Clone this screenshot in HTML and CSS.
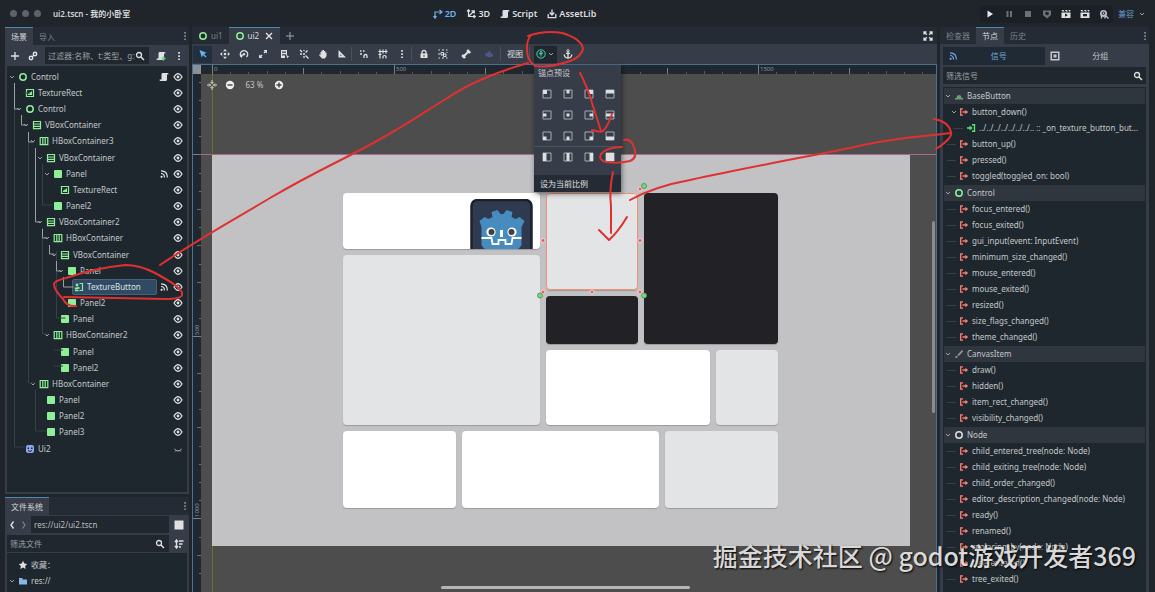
FILE: index.html
```html
<!DOCTYPE html>
<html lang="zh-CN">
<head>
<meta charset="utf-8">
<title>ui2.tscn - 我的小卧室</title>
<link rel="stylesheet" href="styles.css">
</head>
<body>
<svg class="defs" aria-hidden="true">
  <symbol id="caret" viewBox="0 0 8 8"><path d="M2 3l2 2 2-2" fill="none" stroke="#9aa1a8"/></symbol>
  <symbol id="control" viewBox="0 0 10 10"><circle cx="5" cy="5" r="3.2" fill="none" stroke="#8eef97" stroke-width="1.5"/></symbol>
  <symbol id="node" viewBox="0 0 10 10"><circle cx="5" cy="5" r="3.2" fill="none" stroke="#e0e0e0" stroke-width="1.5"/></symbol>
  <symbol id="texrect" viewBox="0 0 10 10"><path d="M1.5 1.5h7v7h-7z" fill="none" stroke="#8eef97" stroke-width="1.2"/><path d="M3 7V5.5h1.2V4.5h1V5L6 3.5h1V7z" fill="#8eef97"/></symbol>
  <symbol id="vbox" viewBox="0 0 10 10"><path d="M1.5 1.5h7v7.2h-7zM1.5 4h7M1.5 6.3h7" fill="none" stroke="#8eef97" stroke-width="1.2"/></symbol>
  <symbol id="hbox" viewBox="0 0 10 10"><path d="M1.2 1.5h7.6v7.2H1.2zM3.8 1.5v7M6.2 1.5v7" fill="none" stroke="#8eef97" stroke-width="1.2"/></symbol>
  <symbol id="panel" viewBox="0 0 10 10"><rect x="1" y="1" width="8" height="8" rx="1" fill="#8eef97"/></symbol>
  <symbol id="texbtn" viewBox="0 0 10 10"><path d="M5.5 1.5h3v7h-3M1 8.6h3.500" fill="none" stroke="#8eef97" stroke-width="1.2"/><circle cx="3" cy="3" r="1.4" fill="#8eef97"/><path d="M.8 7.500V5.500h2.500v-1l3.200 1.500-3.200 1.500z" fill="#8eef97"/></symbol>
  <symbol id="ui2" viewBox="0 0 10 10"><rect x="1" y="1" width="8" height="8" rx="2" fill="#8da5f3"/><path d="M3 6.500q2 2 4 0" fill="none" stroke="#1f272e"/><path d="M2.500 3.500h1.500v1.500H2.500zM6 3.500h1.500v1.500H6z" fill="#1f272e"/></symbol>
  <symbol id="eye" viewBox="0 0 10 10"><path d="M1 5q4-6.800 8 0q-4 6.800-8 0z" fill="none" stroke="#e0e0e0" stroke-width="1.200"/><circle cx="5" cy="5" r="1.400" fill="#e0e0e0"/></symbol>
  <symbol id="shut" viewBox="0 0 10 10"><path d="M1.500 5q3.500 4 7 0M3 6.500l-.8 1M7 6.500l.8 1" fill="none" stroke="#b8bcc0"/></symbol>
  <symbol id="script" viewBox="0 0 10 10"><path d="M3.500 1h5q1 0 1 1.500H8V7.500Q8 9 6.500 9h-5Q.5 9 .5 7.500h2V2.500Q2.500 1 3.500 1z" fill="currentColor"/></symbol>
  <symbol id="sig" viewBox="0 0 10 10"><path d="M2 4.500q3.500 0 3.500 4M2 1.800q6.400 0 6.400 6.700" fill="none" stroke="currentColor" stroke-width="1.200"/><circle cx="2.600" cy="7.800" r="1.100" fill="currentColor"/></symbol>
  <symbol id="signal" viewBox="0 0 10 10"><path d="M4 1.800H1.700v6.400H4M3.500 5h4" fill="none" stroke="#fc7f73" stroke-width="1.300"/><path d="M6.300 2.700L9.200 5 6.300 7.300z" fill="#fc7f73"/></symbol>
  <symbol id="slot" viewBox="0 0 10 10"><path d="M6 1.800h2.500v6.400H6M1 5h3" fill="none" stroke="#5fe070" stroke-width="1.400"/><path d="M3.500 2.500L6.700 5 3.500 7.500z" fill="#5fe070"/></symbol>
  <symbol id="search" viewBox="0 0 10 10"><circle cx="4" cy="4" r="2.500" fill="none" stroke="#e0e0e0" stroke-width="1.300"/><path d="M6 6l3 3" stroke="#e0e0e0" stroke-width="1.500"/></symbol>
  <symbol id="dots" viewBox="0 0 10 10"><path d="M4.200 1h1.700v1.700H4.200zM4.200 4.200h1.700v1.700H4.200zM4.200 7.400h1.700v1.700H4.200z" fill="currentColor"/></symbol>
  <symbol id="basebtn" viewBox="0 0 10 10"><path d="M1 8.500V7h1.500q.3-3 2.500-3t2.500 3H9v1.500z" fill="#6d9e74"/></symbol>
  <symbol id="brush" viewBox="0 0 10 10"><path d="M1 9q0-2 2-2.500L4 7.500Q3.500 9 1 9zM3.500 5.800L8 1l1.300 1.300-4.500 4.700z" fill="#8f9499"/></symbol>
</svg>

<div class="editor">
<header class="top">
  <div class="title"><i></i><i></i><i></i><b>ui2.tscn - 我的小卧室</b></div>
  <nav class="modes">
    <button class="on"><svg class="ic"><path d="M2 9V3h6M.5 7L2 9.200 3.500 7M6.500 1L9 3 6.500 5" fill="none" stroke="currentColor" stroke-width="1.200"/></svg>2D</button>
    <button><svg class="ic"><path d="M2.500 1v6.500H9M2.500 7.500L8 2M1 2.500L2.500 .8 4 2.500M5.500 1.800H8.300V4.500M7.500 6l1.800 1.500L7.500 9" fill="none" stroke="currentColor" stroke-width="1.200"/></svg>3D</button>
    <button><svg class="ic"><use href="#script"/></svg>Script</button>
    <button><svg class="ic"><path d="M5 .5v5M2.700 3.500L5 6l2.300-2.500M1.200 5v3.700h7.600V5" fill="none" stroke="currentColor" stroke-width="1.300"/></svg>AssetLib</button>
  </nav>
  <div class="run">
    <div class="play">
      <button aria-label="运行"><svg class="ic"><path d="M2.500 1.500v7L8 5z" fill="#e8e8e8"/></svg></button>
      <button aria-label="暂停"><svg class="ic"><path d="M2.500 2h2v6h-2zM6 2h2v6H6z" fill="#6d7278"/></svg></button>
      <button aria-label="停止"><svg class="ic"><path d="M2 2h6v6H2z" fill="#6d7278"/></svg></button>
      <button aria-label="远程"><svg class="ic"><path d="M1 1.500h8v4.500L5 9.500 1 6z" fill="#6d7278"/><circle cx="5" cy="4.500" r="1.800" fill="#20262c"/></svg></button>
      <button aria-label="运行场景"><svg class="ic"><path d="M.5 3.500h9V9h-9zM.5 1h2l1 1.500h-2zM4 1h2l1 1.500H5zM7.300 1h2v1.500h-1z" fill="#e0e0e0"/><path d="M4 4.500v3.300L7 6.100z" fill="#20262c"/></svg></button>
      <button aria-label="运行指定场景"><svg class="ic"><path d="M.5 3.500h9V9h-9zM.5 1h2l1 1.500h-2zM4 1h2l1 1.500H5zM7.300 1h2v1.500h-1z" fill="#e0e0e0"/><path d="M3 5h4v2.300H3z" fill="#20262c"/></svg></button>
      <button aria-label="录制"><svg class="ic"><circle cx="4.500" cy="4.500" r="3.500" fill="#b9bdc1"/><path d="M6 6l3.500 3.500M2.500 7v2.500M6 7v2.500" stroke="#b9bdc1" stroke-width="1.400"/><circle cx="4.500" cy="4.200" r="1.300" fill="none" stroke="#20262c"/></svg></button>
    </div>
    <button class="compat">兼容<svg class="ca"><use href="#caret"/></svg></button>
  </div>
</header>

<main class="work">
<aside class="left">
  <section class="dock scene">
    <div class="tabs"><button class="tab on">场景</button><button class="tab">导入</button><button class="more" aria-label="菜单"><svg class="ic"><use href="#dots"/></svg></button></div>
    <div class="body">
      <div class="tools">
        <button aria-label="添加"><svg class="ic"><path d="M5 1v8M1 5h8" stroke="#e0e0e0" stroke-width="1.300"/></svg></button>
        <button aria-label="实例化"><svg class="ic"><circle cx="7" cy="3" r="1.700" fill="none" stroke="#e0e0e0" stroke-width="1.500"/><circle cx="3" cy="7" r="1.700" fill="none" stroke="#e0e0e0" stroke-width="1.500"/><path d="M4 6l2-2" stroke="#e0e0e0" stroke-width="1.300"/></svg></button>
        <label class="field"><input aria-label="过滤器" placeholder="过滤器:名称、t:类型、g:组"><svg class="ic"><use href="#search"/></svg></label>
        <button aria-label="脚本"><svg class="ic"><use href="#script"/><path d="M7.500 5.500v4M5.500 7.500h4" stroke="#5fe070" stroke-width="1.500"/></svg></button>
        <button aria-label="更多"><svg class="ic"><use href="#dots"/></svg></button>
      </div>
      <div class="tree">
        <svg class="guides">
          <path class="dim" d="M7.500 41v339h10M21.500 73v243h6M35.500 97v41h10M35.500 160v107h6M49.500 184v67h9M28.500 323v41h11M16 26h7M47 283h9M47 299h9"/>
          <path d="M7.500 16v26h5M14.500 48v10h5M21.500 65v10h5M28.500 81v74h5M35.500 162v9h5M42.500 178v9h5M49.500 194v10h5M56.500 210v10h10"/>
        </svg>
        <div class="row d0"><svg class="ca"><use href="#caret"/></svg><svg class="ic"><use href="#control"/></svg><span>Control</span><button aria-label="打开脚本"><svg class="ic"><use href="#script"/></svg></button><button aria-label="可见"><svg class="ic"><use href="#eye"/></svg></button></div>
        <div class="row d1"><i class="ca"></i><svg class="ic"><use href="#texrect"/></svg><span>TextureRect</span><button aria-label="可见"><svg class="ic"><use href="#eye"/></svg></button></div>
        <div class="row d1"><svg class="ca"><use href="#caret"/></svg><svg class="ic"><use href="#control"/></svg><span>Control</span><button aria-label="可见"><svg class="ic"><use href="#eye"/></svg></button></div>
        <div class="row d2"><svg class="ca"><use href="#caret"/></svg><svg class="ic"><use href="#vbox"/></svg><span>VBoxContainer</span><button aria-label="可见"><svg class="ic"><use href="#eye"/></svg></button></div>
        <div class="row d3"><svg class="ca"><use href="#caret"/></svg><svg class="ic"><use href="#hbox"/></svg><span>HBoxContainer3</span><button aria-label="可见"><svg class="ic"><use href="#eye"/></svg></button></div>
        <div class="row d4"><svg class="ca"><use href="#caret"/></svg><svg class="ic"><use href="#vbox"/></svg><span>VBoxContainer</span><button aria-label="可见"><svg class="ic"><use href="#eye"/></svg></button></div>
        <div class="row d5"><svg class="ca"><use href="#caret"/></svg><svg class="ic"><use href="#panel"/></svg><span>Panel</span><button aria-label="信号"><svg class="ic"><use href="#sig"/></svg></button><button aria-label="可见"><svg class="ic"><use href="#eye"/></svg></button></div>
        <div class="row d6"><i class="ca"></i><svg class="ic"><use href="#texrect"/></svg><span>TextureRect</span><button aria-label="可见"><svg class="ic"><use href="#eye"/></svg></button></div>
        <div class="row d5"><i class="ca"></i><svg class="ic"><use href="#panel"/></svg><span>Panel2</span><button aria-label="可见"><svg class="ic"><use href="#eye"/></svg></button></div>
        <div class="row d4"><svg class="ca"><use href="#caret"/></svg><svg class="ic"><use href="#vbox"/></svg><span>VBoxContainer2</span><button aria-label="可见"><svg class="ic"><use href="#eye"/></svg></button></div>
        <div class="row d5"><svg class="ca"><use href="#caret"/></svg><svg class="ic"><use href="#hbox"/></svg><span>HBoxContainer</span><button aria-label="可见"><svg class="ic"><use href="#eye"/></svg></button></div>
        <div class="row d6"><svg class="ca"><use href="#caret"/></svg><svg class="ic"><use href="#vbox"/></svg><span>VBoxContainer</span><button aria-label="可见"><svg class="ic"><use href="#eye"/></svg></button></div>
        <div class="row d7"><svg class="ca"><use href="#caret"/></svg><svg class="ic"><use href="#panel"/></svg><span>Panel</span><button aria-label="可见"><svg class="ic"><use href="#eye"/></svg></button></div>
        <div class="row d8"><i class="ca"></i><div class="sel"><svg class="ic"><use href="#texbtn"/></svg><span>TextureButton</span></div><button aria-label="信号"><svg class="ic"><use href="#sig"/></svg></button><button aria-label="可见"><svg class="ic"><use href="#eye"/></svg></button></div>
        <div class="row d7"><i class="ca"></i><svg class="ic"><use href="#panel"/></svg><span>Panel2</span><button aria-label="可见"><svg class="ic"><use href="#eye"/></svg></button></div>
        <div class="row d6"><i class="ca"></i><svg class="ic"><use href="#panel"/></svg><span>Panel</span><button aria-label="可见"><svg class="ic"><use href="#eye"/></svg></button></div>
        <div class="row d5"><svg class="ca"><use href="#caret"/></svg><svg class="ic"><use href="#hbox"/></svg><span>HBoxContainer2</span><button aria-label="可见"><svg class="ic"><use href="#eye"/></svg></button></div>
        <div class="row d6"><i class="ca"></i><svg class="ic"><use href="#panel"/></svg><span>Panel</span><button aria-label="可见"><svg class="ic"><use href="#eye"/></svg></button></div>
        <div class="row d6"><i class="ca"></i><svg class="ic"><use href="#panel"/></svg><span>Panel2</span><button aria-label="可见"><svg class="ic"><use href="#eye"/></svg></button></div>
        <div class="row d3"><svg class="ca"><use href="#caret"/></svg><svg class="ic"><use href="#hbox"/></svg><span>HBoxContainer</span><button aria-label="可见"><svg class="ic"><use href="#eye"/></svg></button></div>
        <div class="row d4"><i class="ca"></i><svg class="ic"><use href="#panel"/></svg><span>Panel</span><button aria-label="可见"><svg class="ic"><use href="#eye"/></svg></button></div>
        <div class="row d4"><i class="ca"></i><svg class="ic"><use href="#panel"/></svg><span>Panel2</span><button aria-label="可见"><svg class="ic"><use href="#eye"/></svg></button></div>
        <div class="row d4"><i class="ca"></i><svg class="ic"><use href="#panel"/></svg><span>Panel3</span><button aria-label="可见"><svg class="ic"><use href="#eye"/></svg></button></div>
        <div class="row d1"><i class="ca"></i><svg class="ic"><use href="#ui2"/></svg><span>Ui2</span><button aria-label="隐藏"><svg class="ic"><use href="#shut"/></svg></button></div>
      </div>
    </div>
  </section>
  <section class="dock files">
    <div class="tabs"><button class="tab on">文件系统</button><button class="more" aria-label="菜单"><svg class="ic"><use href="#dots"/></svg></button></div>
    <div class="body">
      <div class="tools path">
        <button aria-label="后退"><svg class="ic"><path d="M6.500 1.500L4 5l2.500 3.500" fill="none" stroke="#e0e0e0" stroke-width="1.400"/></svg></button>
        <button aria-label="前进"><svg class="ic"><path d="M3.500 1.500L6 5 3.500 8.500" fill="none" stroke="#7d838a" stroke-width="1.200"/></svg></button>
        <label class="field"><input aria-label="路径" value="res://ui2/ui2.tscn"></label>
        <button aria-label="拆分模式"><svg class="ic"><path d="M.5 .5h9v9h-9z" fill="#e0e0e0"/></svg></button>
      </div>
      <div class="tools">
        <label class="field"><input aria-label="筛选文件" placeholder="筛选文件"><svg class="ic"><use href="#search"/></svg></label>
        <button aria-label="排序"><svg class="ic"><path d="M2.500 2v6M1 3l1.500-2L4 3M1 7l1.500 2L4 7M5 2h4.500M5 5h3.500M5 8h2" fill="none" stroke="#e0e0e0" stroke-width="1.300"/></svg></button>
      </div>
      <div class="tree">
        <div class="row d0"><i class="ca"></i><svg class="ic"><path d="M5 .8l1.300 2.800 3 .4-2.200 2 .6 3L5 7.600 2.300 9l.6-3L.7 4l3-.4z" fill="#e0e0e0"/></svg><span>收藏：</span></div>
        <div class="row d0"><svg class="ca"><use href="#caret"/></svg><svg class="ic"><path d="M1 2h3.500v1.500H9v5H1z" fill="#87b7e6"/></svg><span>res://</span></div>
        <div class="row d1"><svg class="ca"><use href="#caret"/></svg><svg class="ic"><path d="M1 2h3.500v1.500H9v5H1z" fill="#87b7e6"/></svg></div>
      </div>
    </div>
  </section>
</aside>

<section class="center">
  <div class="tabs">
    <button class="tab"><svg class="ic"><use href="#control"/></svg>ui1</button>
    <button class="tab on"><svg class="ic"><use href="#control"/></svg>ui2<svg class="ic x"><path d="M2 2l6 6M8 2L2 8" stroke="#e8e8e8" stroke-width="1.300"/></svg></button>
    <button class="plus" aria-label="新建场景"><svg class="ic"><path d="M5 1v8M1 5h8" stroke="#a0a5aa"/></svg></button>
    <button class="more" aria-label="专注模式"><svg class="ic"><path d="M1 3.500V1h2.500M6.500 1H9v2.500M9 6.500V9H6.500M3.500 9H1V6.500M1.500 1.500l2.300 2.300M8.500 1.500L6.200 3.800M8.500 8.500L6.200 6.200M1.500 8.500l2.300-2.300" fill="none" stroke="#e0e0e0" stroke-width="1.300"/></svg></button>
  </div>
  <div class="bar">
    <button class="on" aria-label="选择"><svg class="ic"><path d="M1.500 1l7 2.800L6 5l2.500 2.500-1 1L5 6 3.800 8.500z" fill="#6fb2f0"/></svg></button>
    <div class="grp">
      <button aria-label="移动"><svg class="ic"><path d="M5 0l2 2.200H3zM5 10l2-2.200H3zM0 5l2.200-2v4zM10 5L7.800 3v4z" fill="currentColor"/><circle cx="5" cy="5" r="1.300" fill="currentColor"/></svg></button>
      <button aria-label="旋转"><svg class="ic"><path d="M2.500 8A3.700 3.700 0 1 1 7.500 8" fill="none" stroke="currentColor" stroke-width="1.300"/><circle cx="5" cy="5.200" r="1.200" fill="currentColor"/><path d="M.5 5.500h4L2.500 9z" fill="currentColor"/></svg></button>
      <button aria-label="缩放"><svg class="ic"><path d="M5.500 1H9v3.500zM1 5.500V9h3.500z" fill="currentColor"/><path d="M2.500 7.500l1.500-1.500M6 4l1.500-1.500" stroke="currentColor" stroke-width="1.600"/></svg></button>
    </div>
    <div class="grp">
      <button aria-label="列表"><svg class="ic"><path d="M1 1h6v1.600H1zM1 3.800h6v1.400H1zM1 6.500h4V9H1zM6 6l3.500 1.500L8 8l-.5 1.500z" fill="currentColor"/><path d="M1.500 1v8M6.500 1v5" stroke="currentColor"/></svg></button>
      <button aria-label="轴心"><svg class="ic"><path d="M1 1l2 2M8.500 1.500l-2 2M1 5h2M5 1v1M5 7v2M6.500 6.500l3 3" stroke="currentColor" stroke-width="1.300"/><circle cx="5" cy="5" r="1" fill="currentColor"/></svg></button>
      <button aria-label="平移"><svg class="ic"><path d="M2.500 6V3h1V1.500h1.200V1H6v1h1.200v1.500h1.300V7L7 9.500H4L1 6l.7-.8z" fill="currentColor"/></svg></button>
      <button aria-label="标尺"><svg class="ic"><path d="M1.500 1v7.500H9z" fill="currentColor"/><path d="M3.300 5.200v1.600H5z" fill="#363d48"/></svg></button>
    </div>
    <i class="sep"></i>
    <div class="grp">
      <button aria-label="智能吸附"><svg class="ic"><path d="M1 2h1.500M4 2h1.500M1 5h2M5 9V7q0-1.500 1.500-1.500T8 7V9" fill="none" stroke="currentColor" stroke-width="1.300"/></svg></button>
      <button aria-label="栅格吸附"><svg class="ic"><path d="M2 .5v9M5 .5v4M8 .5v4M.5 2.500h9M.5 5.500h3M5 9.500V7.500q0-1 1.500-1t1.500 1v2" fill="none" stroke="currentColor" stroke-width="1.200"/></svg></button>
      <button aria-label="吸附选项"><svg class="ic"><use href="#dots"/></svg></button>
    </div>
    <i class="sep"></i>
    <div class="grp">
      <button aria-label="锁定"><svg class="ic"><path d="M3 5V3.500q0-2 2-2t2 2V5" fill="none" stroke="currentColor" stroke-width="1.300"/><path d="M1.500 4.500h7V9h-7z" fill="currentColor"/><path d="M4.500 6h1v1.800h-1z" fill="#363d48"/></svg></button>
      <button aria-label="编组"><svg class="ic"><path d="M.5 1h1.500M8 1h1.500M.5 9h1.500M8 9h1.500M3 3.500h2.500V6H3zM5.500 5H8v2.500H5.500zM1 4v2M9 3v1M4 1h2M4 9h2" fill="none" stroke="currentColor"/></svg></button>
    </div>
    <div class="grp wide">
      <button aria-label="骨骼"><svg class="ic"><path d="M2.500 7.500l5-5" stroke="currentColor" stroke-width="2"/><circle cx="2" cy="7" r="1.400" fill="currentColor"/><circle cx="3.200" cy="8.200" r="1.400" fill="currentColor"/><circle cx="7" cy="2" r="1.400" fill="currentColor"/><circle cx="8.200" cy="3.200" r="1.400" fill="currentColor"/></svg></button>
      <button aria-label="画笔"><svg class="ic"><path d="M1 6q0-2.500 2.500-2Q4 1.500 6 2.500q1 .5.800 1.500Q9.500 4.500 9 7q-1 1.500-4 1.300T1 6z" fill="#4d5686"/></svg></button>
    </div>
    <i class="sep"></i>
    <button class="txt">视图</button>
    <i class="sep"></i>
    <button class="anchor" aria-label="锚点预设"><svg class="ic"><circle cx="5" cy="5" r="4.200" fill="none" stroke="#45d6b5"/><path d="M5 2.500v5M3 4.700h4M3.700 3.700L5 2.200l1.300 1.500" fill="none" stroke="#45d6b5"/></svg><svg class="ca"><use href="#caret"/></svg></button>
    <button aria-label="锚点模式"><svg class="ic"><path d="M5 3v6M3 4.300h4M1.200 5.500Q1.500 9 5 9t3.800-3.500" fill="none" stroke="currentColor" stroke-width="1.300"/><circle cx="5" cy="1.800" r="1.100" fill="none" stroke="currentColor"/></svg></button>
  </div>
  <div class="view">
    <svg class="ruler h"><path d="M11.500 0v9M102.500 3v6M193.500 0v9M284.500 3v6M375.500 0v9M466.500 3v6M557.500 0v9M648.500 3v6" stroke="#7b8085"/><path d="M29.500 7v2M47.500 7v2M66.500 6v3M84.500 7v2M120.500 7v2M139.500 6v3M157.500 7v2M175.500 7v2M211.500 7v2M230.500 6v3M248.500 7v2M266.500 7v2M302.500 7v2M321.500 6v3M339.500 7v2M439.500 7v2M485.500 7v2M503.500 6v3M521.500 7v2M539.500 7v2M575.500 7v2M594.500 6v3M612.500 7v2M630.500 7v2M667.500 7v2M685.500 6v3M703.500 7v2M721.500 7v2" stroke="#555b61"/><text x="13" y="6">0</text><text x="195" y="6">500</text><text x="559" y="6">1500</text></svg>
    <svg class="ruler v"><path d="M0 80.500h9M0 262.500h9M0 444.500h9" stroke="#7b8085"/><path d="M6 8.500h3M6 26.500h3M6 44.500h3M6 62.500h3M6 99.500h3M6 117.500h3M4 135.500h5M6 153.500h3M4 171.500h5M6 190.500h3M4 208.500h5M6 226.500h3M6 244.500h3M6 281.500h3M4 299.500h5M6 317.500h3M6 335.500h3M4 353.500h5M6 372.500h3M6 390.500h3M6 408.500h3M6 426.500h3M6 463.500h3M4 481.500h5M6 499.500h3" stroke="#6b7075"/><text transform="translate(6 261) rotate(-90)">500</text><text transform="translate(6 443) rotate(-90)">1000</text></svg>
    <div class="canvas">
      <i class="axis ax"></i><i class="axis ay"></i>
      <div class="page">
        <div class="bento">
          <div class="line">
            <div class="col a">
              <div class="card s1 white"><svg class="robot" viewBox="0 0 62 62"><rect x="1" y="1" width="60" height="60" rx="6" fill="#2f3a51" stroke="#1b202b" stroke-width="2.500"/><path d="M11 28l-2-6 5-4 4 2 4-2-1-5 6-2 3 4h3l3-4 6 2-1 5 4 2 4-2 5 4-3 6v18q-4 8-20 8t-20-8z" fill="#478cbf"/><path d="M11 39h10l1 6h6v-4h7v4h6l1-6h9" fill="none" stroke="#fff" stroke-width="1.800"/><circle cx="20.500" cy="33" r="4.600" fill="#fff"/><circle cx="41.500" cy="33" r="4.600" fill="#fff"/><circle cx="21" cy="33" r="3" fill="#414042"/><circle cx="41" cy="33" r="3" fill="#414042"/><path d="M29.500 31h3v7h-3z" fill="#fff"/></svg></div>
              <div class="card grow"></div>
            </div>
            <div class="col b">
              <div class="line grow">
                <div class="col c"><div class="card grow selected"></div><div class="card s2 black"></div></div>
                <div class="card grow black"></div>
              </div>
              <div class="line s3"><div class="card grow white"></div><div class="card s4"></div></div>
            </div>
          </div>
          <div class="line s5"><div class="card s6 white"></div><div class="card grow white"></div><div class="card s6"></div></div>
        </div>
      </div>
      <svg class="handles"><g fill="#ed5b58" stroke="#f6d5d5"><circle cx="342" cy="166.500" r="2"/><circle cx="439" cy="166.500" r="2"/><circle cx="391" cy="218" r="2"/><circle cx="342" cy="218" r="2"/><circle cx="439" cy="218" r="2"/><circle cx="439" cy="115" r="2"/></g><g fill="#6fdc78" stroke="#5a9a5f"><circle cx="339" cy="221.500" r="2.500"/><circle cx="443" cy="221.500" r="2.500"/><circle cx="443" cy="112" r="2.500"/></g></svg>
      <div class="zoombar">
        <button aria-label="居中"><svg class="ic"><path d="M5 0v3.500M5 6.500V10M0 5h3.500M6.500 5H10M3.500 2L5 3.500 6.500 2M3.500 8L5 6.500 6.500 8M2 3.500L3.500 5 2 6.500M8 3.500L6.500 5 8 6.500" fill="none" stroke="#d5d5d5"/></svg></button>
        <button aria-label="缩小"><svg class="ic"><circle cx="5" cy="5" r="4.200" fill="#eee"/><path d="M2.500 5h5" stroke="#444" stroke-width="1.400"/></svg></button>
        <span>63 %</span>
        <button aria-label="放大"><svg class="ic"><circle cx="5" cy="5" r="4.200" fill="#eee"/><path d="M2.500 5h5M5 2.500v5" stroke="#444" stroke-width="1.400"/></svg></button>
      </div>
      <i class="vbar"></i><i class="hbar"></i>
    </div>
  </div>
  <div class="popup">
    <div class="ptitle">锚点预设</div>
    <div class="presets">
      <button aria-label="左上"><svg class="ic"><path class="f" d="M1 1h8v8H1z"/><path d="M1 1h4v4H1z"/></svg></button>
      <button aria-label="中上"><svg class="ic"><path class="f" d="M1 1h8v8H1z"/><path d="M3.500 1h3v3.500h-3z"/></svg></button>
      <button aria-label="右上"><svg class="ic"><path class="f" d="M1 1h8v8H1z"/><path d="M5 1h4v4H5z"/></svg></button>
      <button aria-label="上延展"><svg class="ic"><path class="f" d="M1 1h8v8H1z"/><path d="M1 1h8v3.500H1z"/></svg></button>
      <button aria-label="左中"><svg class="ic"><path class="f" d="M1 1h8v8H1z"/><path d="M1 3.500h3.500v3H1z"/></svg></button>
      <button aria-label="居中"><svg class="ic"><path class="f" d="M1 1h8v8H1z"/><path d="M3.500 3.500h3v3h-3z"/></svg></button>
      <button aria-label="右中"><svg class="ic"><path class="f" d="M1 1h8v8H1z"/><path d="M5.500 3.500H9v3H5.500z"/></svg></button>
      <button aria-label="水平居中延展"><svg class="ic"><path class="f" d="M1 1h8v8H1z"/><path d="M1 3.500h8v3H1z"/></svg></button>
      <button aria-label="左下"><svg class="ic"><path class="f" d="M1 1h8v8H1z"/><path d="M1 5.500h3.500V9H1z"/></svg></button>
      <button aria-label="中下"><svg class="ic"><path class="f" d="M1 1h8v8H1z"/><path d="M3.500 5.500h3V9h-3z"/></svg></button>
      <button aria-label="右下"><svg class="ic"><path class="f" d="M1 1h8v8H1z"/><path d="M5.500 5.500H9V9H5.500z"/></svg></button>
      <button aria-label="下延展"><svg class="ic"><path class="f" d="M1 1h8v8H1z"/><path d="M1 5.500h8V9H1z"/></svg></button>
    </div>
    <div class="presets last">
      <button aria-label="左延展"><svg class="ic"><path class="f" d="M1 1h8v8H1z"/><path d="M1 1h3.500v8H1z"/></svg></button>
      <button aria-label="垂直居中延展"><svg class="ic"><path class="f" d="M1 1h8v8H1z"/><path d="M3.500 1h3v8h-3z"/></svg></button>
      <button aria-label="右延展"><svg class="ic"><path class="f" d="M1 1h8v8H1z"/><path d="M5.500 1H9v8H5.500z"/></svg></button>
      <button aria-label="整个矩形"><svg class="ic"><path class="f" d="M1 1h8v8H1z"/><path d="M1 1h8v8H1z"/></svg></button>
    </div>
    <button class="ratio">设为当前比例</button>
  </div>
</section>

<aside class="right">
  <section class="dock">
    <div class="tabs"><button class="tab">检查器</button><button class="tab on">节点</button><button class="tab">历史</button><button class="more" aria-label="菜单"><svg class="ic"><use href="#dots"/></svg></button></div>
    <div class="body">
      <div class="switch"><button class="on"><svg class="ic"><use href="#sig"/></svg><span>信号</span></button><button><svg class="ic"><path d="M1.200 1.200h7.600v7.600H1.200z" fill="none" stroke="currentColor" stroke-width="1.500"/><path d="M3.500 3.500h3v3h-3z" fill="currentColor"/></svg><span>分组</span></button></div>
      <label class="field"><input aria-label="筛选信号" placeholder="筛选信号"><svg class="ic"><use href="#search"/></svg></label>
      <div class="signals">
        <section>
          <h2><svg class="ca"><use href="#caret"/></svg><svg class="ic"><use href="#basebtn"/></svg>BaseButton</h2>
          <ul>
            <li class="open"><svg class="ca"><use href="#caret"/></svg><svg class="ic"><use href="#signal"/></svg>button_down()</li>
            <li class="sub"><svg class="ic"><use href="#slot"/></svg>../../../../../../../.. :: _on_texture_button_but...</li>
            <li><svg class="ic"><use href="#signal"/></svg>button_up()</li>
            <li><svg class="ic"><use href="#signal"/></svg>pressed()</li>
            <li><svg class="ic"><use href="#signal"/></svg>toggled(toggled_on: bool)</li>
          </ul>
        </section>
        <section>
          <h2><svg class="ca"><use href="#caret"/></svg><svg class="ic"><use href="#control"/></svg>Control</h2>
          <ul>
            <li><svg class="ic"><use href="#signal"/></svg>focus_entered()</li>
            <li><svg class="ic"><use href="#signal"/></svg>focus_exited()</li>
            <li><svg class="ic"><use href="#signal"/></svg>gui_input(event: InputEvent)</li>
            <li><svg class="ic"><use href="#signal"/></svg>minimum_size_changed()</li>
            <li><svg class="ic"><use href="#signal"/></svg>mouse_entered()</li>
            <li><svg class="ic"><use href="#signal"/></svg>mouse_exited()</li>
            <li><svg class="ic"><use href="#signal"/></svg>resized()</li>
            <li><svg class="ic"><use href="#signal"/></svg>size_flags_changed()</li>
            <li><svg class="ic"><use href="#signal"/></svg>theme_changed()</li>
          </ul>
        </section>
        <section>
          <h2><svg class="ca"><use href="#caret"/></svg><svg class="ic"><use href="#brush"/></svg>CanvasItem</h2>
          <ul>
            <li><svg class="ic"><use href="#signal"/></svg>draw()</li>
            <li><svg class="ic"><use href="#signal"/></svg>hidden()</li>
            <li><svg class="ic"><use href="#signal"/></svg>item_rect_changed()</li>
            <li><svg class="ic"><use href="#signal"/></svg>visibility_changed()</li>
          </ul>
        </section>
        <section>
          <h2><svg class="ca"><use href="#caret"/></svg><svg class="ic"><use href="#node"/></svg>Node</h2>
          <ul>
            <li><svg class="ic"><use href="#signal"/></svg>child_entered_tree(node: Node)</li>
            <li><svg class="ic"><use href="#signal"/></svg>child_exiting_tree(node: Node)</li>
            <li><svg class="ic"><use href="#signal"/></svg>child_order_changed()</li>
            <li><svg class="ic"><use href="#signal"/></svg>editor_description_changed(node: Node)</li>
            <li><svg class="ic"><use href="#signal"/></svg>ready()</li>
            <li><svg class="ic"><use href="#signal"/></svg>renamed()</li>
            <li><svg class="ic"><use href="#signal"/></svg>replacing_by(node: Node)</li>
            <li><svg class="ic"><use href="#signal"/></svg>tree_entered()</li>
            <li><svg class="ic"><use href="#signal"/></svg>tree_exited()</li>
          </ul>
        </section>
      </div>
    </div>
  </section>
</aside>
</main>

<svg class="ink" aria-hidden="true">
  <path d="M76 306Q67 307 63 299Q54 290 54 284Q54 281 66 278Q95 268 125 265Q140 265 155 273Q185 289 182 295Q181 299 165 299L64 297"/>
  <path d="M160 265C200 238 235 219 270 198C320 169 335 164 375 142C410 123 430 108 446 99C466 85 490 74 528 63"/>
  <path d="M528 36Q545 30 562 33Q582 39 583 49Q581 57 570 61Q550 68 535 66Q526 60 527 47Q527 40 531 35"/>
  <path d="M580 73Q587 86 592 103L601 131M592 130Q601 133 603 131Q608 126 612 114"/>
  <path d="M622 147Q607 147 601 154Q598 160 606 162Q618 164 630 161Q638 158 634 147Q631 138 624 140"/>
  <path d="M613 172Q609 190 611 206L611 233M599 230Q607 238 609 240Q618 232 627 217"/>
  <path d="M630 200C648 190 668 184 690 180C745 168 800 158 850 148C890 138 920 137 951 133"/>
  <path d="M934 119Q948 121 951 132Q953 138 936 149"/>
</svg>
<div class="mark">掘金技术社区 @ godot游戏开发者369</div>
</div>
</body>
</html>
```
FILE: styles.css
```css
* { box-sizing: border-box; }
body { margin: 0; background: #1f252b; color: #c3c7ca; font: 8px/16px "Noto Sans", "Noto Sans CJK SC", sans-serif; }
button, input { font: inherit; color: inherit; background: none; border: 0; padding: 0; margin: 0; }
button { display: flex; align-items: center; justify-content: center; flex: none; white-space: nowrap; }
input { outline: 0; flex: 1; min-width: 0; width: 0; height: 16px; }
input::placeholder { color: #9da2a7; opacity: 1; }
h2, ul { margin: 0; padding: 0; font: inherit; list-style: none; }
.defs { position: absolute; width: 0; height: 0; }
.ic { width: 10px; height: 10px; flex: none; }
.ca { width: 8px; height: 8px; flex: none; }

.editor { position: relative; display: flex; flex-direction: column; height: 100vh; overflow: hidden; }
.top { display: grid; grid-template-columns: 13fr auto 17fr; align-items: center; height: 27px; padding: 0 6px 0 10px; }
.title { display: flex; align-items: center; gap: 5px; }
.title i { width: 7px; height: 7px; border-radius: 50%; background: #5f6266; }
.title b { margin-left: 7px; font-weight: 600; color: #d4d6d8; }
.modes { display: flex; gap: 10px; font-size: 9px; color: #dcdee0; }
.modes button { gap: 2px; font-weight: 600; }
.modes .on { color: #6fb2f0; }
.run { display: flex; justify-content: flex-end; gap: 5px; }
.play { display: flex; background: #1a2026; border-radius: 3px; }
.play button { width: 19px; height: 18px; }
.compat { color: #6899c4; gap: 4px; padding-right: 3px; }

.work { flex: 1; min-height: 0; display: grid; grid-template-columns: 184px 1fr 209px; gap: 3px; padding: 0 6px 0 5px; }
.left { display: flex; flex-direction: column; gap: 3px; min-height: 0; }
.right { display: flex; min-height: 0; }
.dock { display: flex; flex-direction: column; flex: 1; min-width: 0; min-height: 0; }
.files { flex: 0 0 95px; }
.tabs { display: flex; height: 18px; flex: none; background: #252b34; }
.tab { padding: 0 6px; border-top: 1px solid transparent; color: #7c8288; }
.tab.on { background: #363d48; border-top-color: #4f87b3; color: #d5d8da; }
.more { margin-left: auto; width: 9px; color: #858a8f; }
.body { flex: 1; min-height: 0; display: flex; flex-direction: column; background: #363d48; padding: 0 2px; }
.scene .body { padding-bottom: 2px; }
.tools { display: flex; align-items: center; gap: 8px; height: 21px; flex: none; padding: 0 3px; color: #e0e0e0; }
.scene .field { margin: 0 -1px; }
.files .tools { height: 19px; padding: 0 3px 0 0; gap: 5px; }
.files .tools.path { padding-left: 0; gap: 2px; }
.files .path .field { margin-right: 3px; }
.field { display: flex; align-items: center; flex: 1; height: 17px; min-width: 0; padding: 0 4px 0 3px; background: #20272e; color: #b9bdc1; }
.tree { position: relative; flex: 1; min-height: 0; overflow: hidden; background: #1f272e; padding-top: 3px; }
.files .tree { padding-top: 4px; }
.row { display: flex; align-items: center; height: 16px; padding-right: 4px; color: #c3c7ca; }
.scene .row:nth-child(6n) { margin-bottom: 1px; }
.row span { flex: 1; padding-left: 3px; }
.row > .ic, .sel .ic { margin-left: 2px; }
.row button { width: 14px; color: #e0e0e0; }
.row button:last-child { width: 10px; }
.row button + button { margin-left: 2px; }
.d0 { padding-left: 1px; } .d1 { padding-left: 8px; } .d2 { padding-left: 15px; } .d3 { padding-left: 22px; }
.d4 { padding-left: 29px; } .d5 { padding-left: 36px; } .d6 { padding-left: 43px; } .d7 { padding-left: 50px; } .d8 { padding-left: 57px; }
.sel { flex: 1; display: flex; align-items: center; background: #2f4a62; border: 1px solid #46617a; border-radius: 2px; height: 16px; }
.sel .ic { margin-left: 1px; }
.sel span { color: #dfe2e4; }
.guides { position: absolute; left: 0; top: 1px; width: 100%; height: 100%; pointer-events: none; }
.guides path { fill: none; stroke: #9ba0a5; }
.guides .dim { stroke: #394047; }

.center { position: relative; display: flex; flex-direction: column; min-width: 0; min-height: 0; }
.center .tabs { height: 17px; }
.center .tab { gap: 3px; padding: 0 6px; }
.center .tab .x { margin-left: 2px; }
.plus { width: 20px; }
.center .more { width: 18px; }
.bar { display: flex; align-items: center; height: 21px; flex: none; background: #363d48; border-bottom: 1px solid #4a7190; color: #e0e0e0; padding-left: 1px; }
.bar button { width: 19px; height: 17px; }
.bar .on { background: #20303f; }
.grp { display: flex; margin-left: 3px; }
.sep + .grp { margin-left: 2px; }
.grp.wide { gap: 4px; margin-left: 4px; }
.sep { width: 1px; height: 14px; background: #4a515b; }
.grp.wide + .sep { margin-left: 2px; }
.bar .txt { width: 28px; }
.bar .anchor { width: 23px; gap: 1px; margin: 0 1px 0 4px; background: #20272e; }
.view { flex: 1; min-height: 0; display: grid; grid-template: 9px 1fr / 8px 1fr; background: #20272e; border-left: 1px solid #4a7190; border-right: 1px solid #4a7190; }
.ruler { width: 100%; height: 100%; min-height: 0; }
.ruler text { font-size: 6px; fill: #8d9296; }
.ruler.h { grid-column: 2; }
.ruler.v { grid-column: 1; grid-row: 2; }
.view::before { content: ""; background: #8c9094; grid-column: 1; grid-row: 1; }
.canvas { position: relative; grid-column: 2; grid-row: 2; overflow: hidden; background: #4d4d4d; }
.axis { position: absolute; }
.ax { left: 0; right: 0; top: 80px; height: 1px; background: #a86a93; }
.ay { top: 0; bottom: 0; left: 11px; width: 1px; background: #697029; }
.page { position: absolute; left: 11px; top: 81px; padding: 38px 132px 38px 131px; background: #c2c2c5; }
.bento { display: flex; flex-direction: column; gap: 6px; width: 435px; height: 315px; }
.line { display: flex; gap: 6px; flex: 1; min-height: 0; }
.col { display: flex; flex-direction: column; gap: 6px; }
.grow { flex: 1; }
.col.a { width: 197px; } .col.b { flex: 1; } .col.c { width: 92px; }
.card { background: #e3e4e6; border-radius: 4px; box-shadow: 0 1px 1px #9a9a9e; overflow: hidden; }
.white { background: #fff; } .black { background: #222125; }
.s1 { height: 56px; display: flex; justify-content: flex-end; padding: 6px 7px 0 0; }
.s2 { height: 48px; } .line.s3 { flex: none; height: 75px; } .s4 { width: 62px; }
.line.s5 { flex: none; height: 77px; } .s6 { width: 113px; }
.robot { width: 63px; height: 62px; flex: none; }
.selected { outline: 1px solid #f0926f; outline-offset: -1px; }
.handles { position: absolute; left: 0; top: 0; width: 100%; height: 100%; }
.zoombar { position: absolute; left: 6px; top: 3px; display: flex; align-items: center; gap: 8px; }
.zoombar span { width: 23px; text-align: center; color: #c4c4c4; }
.vbar, .hbar { position: absolute; border-radius: 2px; background: #8b8b8b; }
.vbar { right: 1px; top: 147px; width: 3px; height: 192px; }
.hbar { left: 240px; bottom: 3px; width: 249px; height: 3px; background: #b5b5b5; }

.popup { position: absolute; left: 342px; top: 38px; width: 87px; background: #363d48; box-shadow: 1px 2px 5px #0007; color: #c9ccd0; }
.ptitle { padding-left: 4px; height: 18px; }
.presets { display: grid; grid-template-columns: repeat(4, 21px); padding-left: 2px; }
.presets button { height: 21px; }
.presets .ic { fill: #dcdedf; }
.presets .f { fill: none; stroke: #a9adb1; }
.last { border-top: 1px solid #4b525c; }
.last button { height: 20px; }
.ratio { width: 100%; height: 17px; margin-top: 8px; padding-left: 6px; justify-content: flex-start; background: #252b34; color: #e0e2e4; }

.right .tabs { height: 17px; }
.right .body { padding: 3px 3px 0; gap: 2px; }
.switch { display: grid; grid-template-columns: 1fr 1fr; height: 18px; flex: none; }
.switch button { padding: 0 5px; }
.switch span { flex: 1; }
.switch .on { background: #202a34; color: #6fa9dc; }
.right .field { flex: none; padding: 0 3px; }
.signals { flex: 1; min-height: 0; overflow: hidden; display: flex; flex-direction: column; gap: 1px; margin-top: 1px; padding: 1px 1px 0; background: #1f272e; }
.signals section { flex: none; }
.signals h2 { display: flex; align-items: center; gap: 2px; height: 16px; background: #2f363e; }
.signals h2 .ic { margin-right: 1px; }
.signals li { display: flex; align-items: center; height: 16px; gap: 3px; white-space: nowrap; }
.signals li::before { content: ""; width: 9px; height: 1px; margin-left: 3px; background: #394047; }
.signals .open { padding-left: 6px; gap: 1px; }
.signals .open::before { display: none; }
.signals .open .ic { margin-right: 2px; }
.signals .sub { padding-left: 7px; }

.ink { position: absolute; left: 0; top: 0; width: 100%; height: 100%; pointer-events: none; }
.ink path { fill: none; stroke: #df3131; stroke-width: 2; stroke-linecap: round; stroke-linejoin: round; }
.mark { position: absolute; right: 19px; bottom: 19px; font: 500 25px/36px "Noto Sans CJK SC", sans-serif; color: #d8d8d8; text-shadow: 1px 1px 2px #000; white-space: nowrap; }
```
